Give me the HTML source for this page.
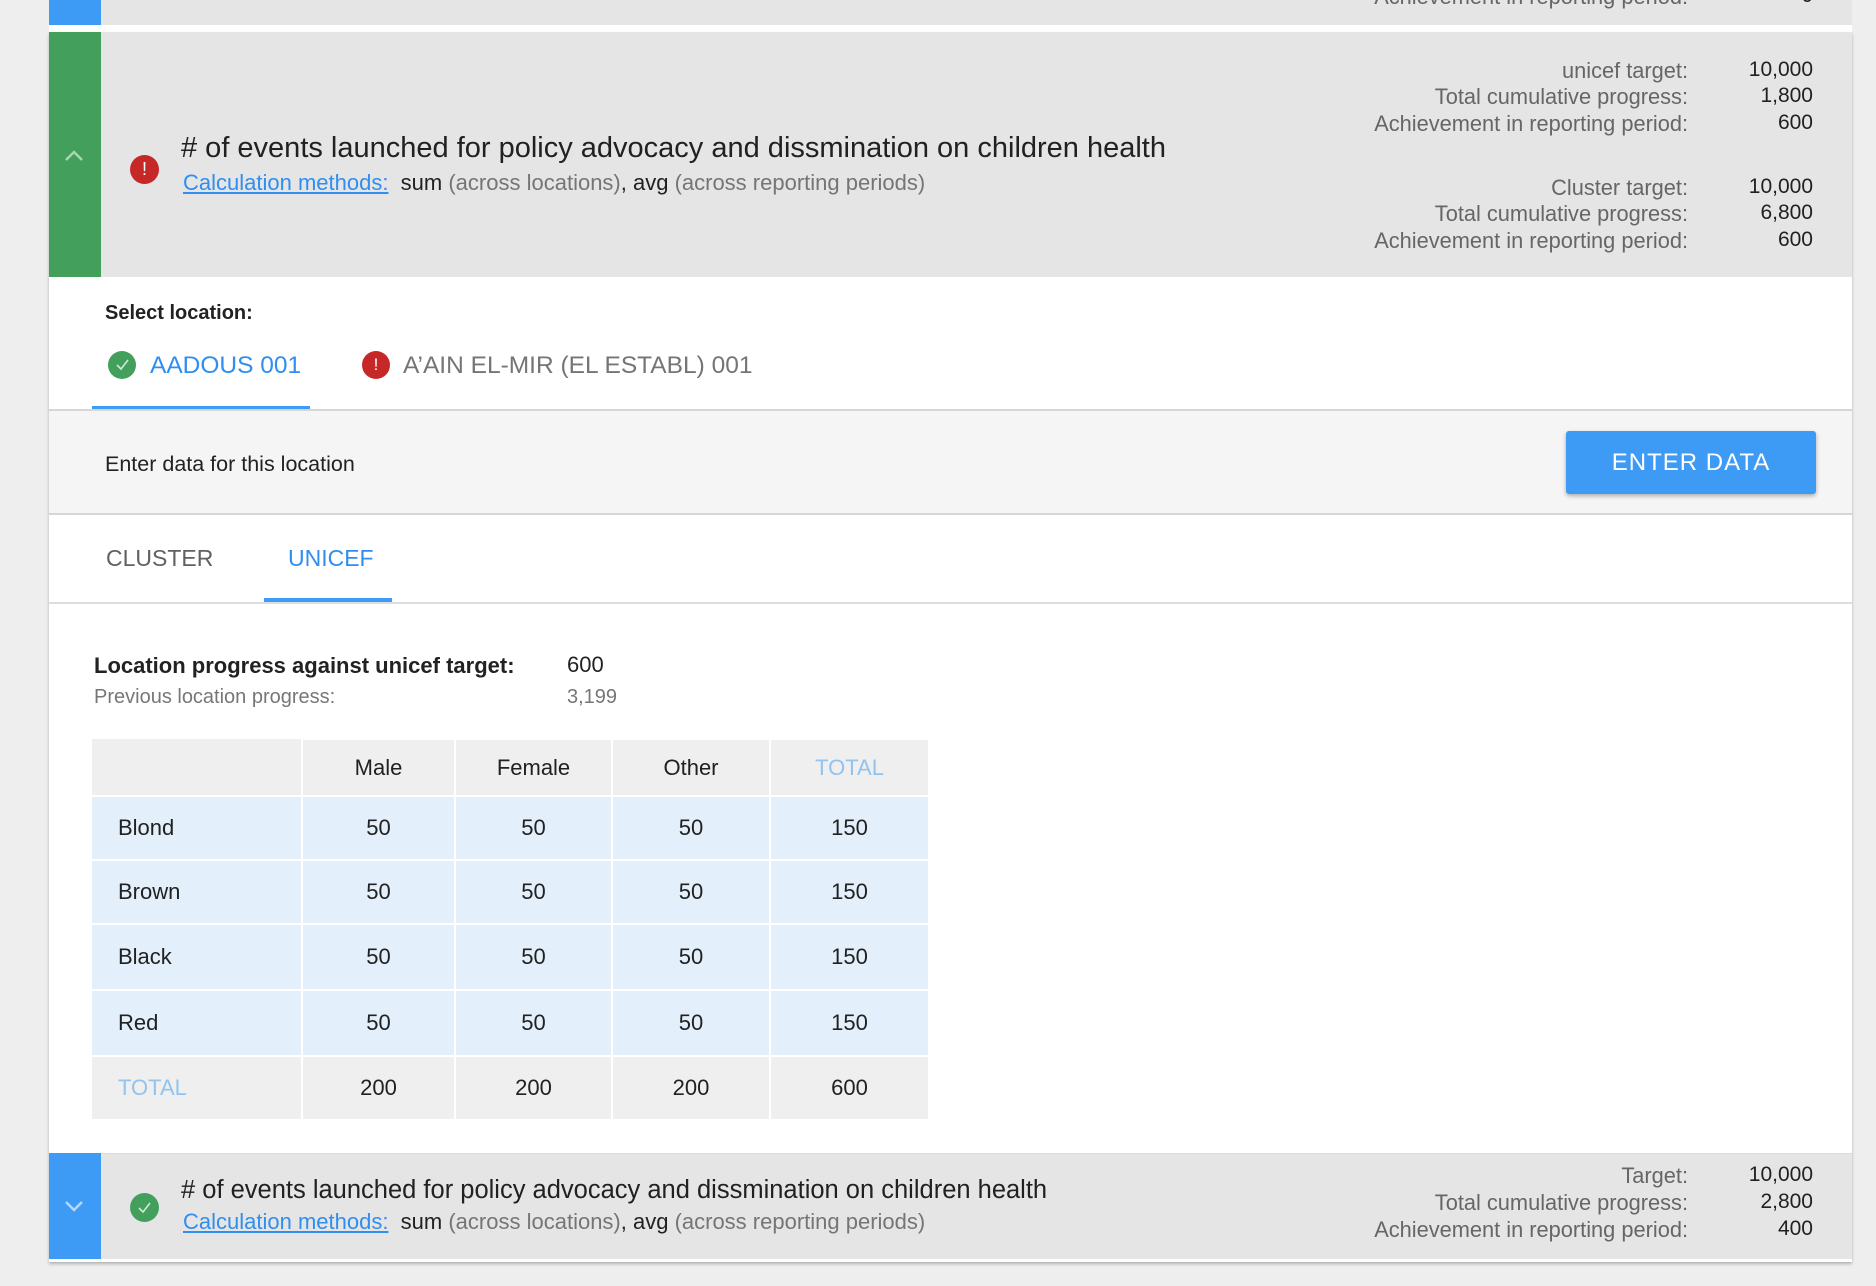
<!DOCTYPE html>
<html><head><meta charset="utf-8"><style>
*{margin:0;padding:0;box-sizing:border-box}
body{width:1876px;height:1286px;background:#eeeeee;font-family:"Liberation Sans",sans-serif;position:relative;overflow:hidden;color:#212121}
.a{position:absolute;white-space:nowrap}
.lbl{color:#666;font-size:21.8px;text-align:right;width:500px}
.val{color:#212121;font-size:21px;text-align:right;width:120px}
.link{color:#2f8ef0;text-decoration:underline}
.g{color:#757575}
td{border:2px solid #fff;text-align:center;font-size:22px;color:#212121}
</style></head><body>
<!-- top card remnant -->
<div class="a" style="left:49px;top:0;width:1803px;height:25px;background:#e5e5e5;overflow:hidden">
<div class="a lbl" style="left:1139px;top:-16px">Achievement in reporting period:</div><div class="a val" style="left:1644px;top:-16px">0</div></div>
<div class="a" style="left:49px;top:0;width:52px;height:25px;background:#3d9af5"></div>
<div class="a" style="left:49px;top:25px;width:1803px;height:7px;background:#fff"></div>
<!-- main card -->
<div class="a" style="left:49px;top:32px;width:1803px;height:1230px;background:#fff;box-shadow:0 2px 3px rgba(0,0,0,.25)"></div>
<div class="a" style="left:49px;top:32px;width:1803px;height:245px;background:#e5e5e5"></div>
<div class="a" style="left:49px;top:32px;width:52px;height:245px;background:#43a05c"></div>
<svg class="a" style="left:63px;top:148px" width="22" height="14"><path d="M3 12 L11 4 L19 12" stroke="#a8d5b2" stroke-width="2.5" fill="none"/></svg>
<div class="a" style="left:130px;top:155px;width:29px;height:29px;border-radius:50%;background:#c62828;color:#fff;font-size:18px;text-align:center;line-height:29px">!</div>
<div class="a" style="left:181px;top:132px;font-size:29px">#&nbsp;of events launched for policy advocacy and dissmination on children health</div>
<div class="a" style="left:183px;top:170px;font-size:22px"><span class="link">Calculation methods:</span>&nbsp; sum <span class="g">(across locations)</span>, avg <span class="g">(across reporting periods)</span></div>
<div class="a lbl" style="left:1188px;top:58px">unicef target:</div><div class="a val" style="left:1693px;top:58px">10,000</div>
<div class="a lbl" style="left:1188px;top:84px">Total cumulative progress:</div><div class="a val" style="left:1693px;top:84px">1,800</div>
<div class="a lbl" style="left:1188px;top:111px">Achievement in reporting period:</div><div class="a val" style="left:1693px;top:111px">600</div>
<div class="a lbl" style="left:1188px;top:175px">Cluster target:</div><div class="a val" style="left:1693px;top:175px">10,000</div>
<div class="a lbl" style="left:1188px;top:201px">Total cumulative progress:</div><div class="a val" style="left:1693px;top:201px">6,800</div>
<div class="a lbl" style="left:1188px;top:228px">Achievement in reporting period:</div><div class="a val" style="left:1693px;top:228px">600</div>
<!-- select location -->
<div class="a" style="left:105px;top:302px;font-size:20px;font-weight:bold;color:#222">Select location:</div>
<div class="a" style="left:108px;top:351px;width:28px;height:28px;border-radius:50%;background:#43a05c"><svg width="28" height="28"><path d="M9 14 L13 18 L20 9" stroke="#cfe9d5" stroke-width="1.6" fill="none"/></svg></div>
<div class="a" style="left:150px;top:352px;font-size:24.5px;color:#2f8ef0">AADOUS 001</div>
<div class="a" style="left:362px;top:351px;width:28px;height:28px;border-radius:50%;background:#c62828;color:#fff;font-size:17px;text-align:center;line-height:28px">!</div>
<div class="a" style="left:403px;top:352px;font-size:24.5px;color:#757575">A’AIN EL-MIR (EL ESTABL) 001</div>
<div class="a" style="left:92px;top:406px;width:218px;height:3px;background:#3d9af5"></div>
<div class="a" style="left:49px;top:409px;width:1803px;height:106px;background:#f5f5f5;border-top:2px solid #d6d6d6;border-bottom:2px solid #d6d6d6"></div>
<div class="a" style="left:105px;top:452px;font-size:21.5px;color:#222">Enter data for this location</div>
<div class="a" style="left:1566px;top:431px;width:250px;height:63px;background:#3d9af5;border-radius:3px;box-shadow:0 2px 4px rgba(0,0,0,.3);color:#fff;font-size:24px;text-align:center;line-height:63px;letter-spacing:1px">ENTER DATA</div>
<!-- tabs -->
<div class="a" style="left:106px;top:545px;font-size:23px;color:#616161">CLUSTER</div>
<div class="a" style="left:288px;top:545px;font-size:23px;color:#2f8ef0">UNICEF</div>
<div class="a" style="left:264px;top:598px;width:128px;height:4px;background:#3d9af5"></div>
<div class="a" style="left:49px;top:602px;width:1803px;height:2px;background:#ddd"></div>
<div class="a" style="left:94px;top:653px;font-size:22px;font-weight:bold;color:#222">Location progress against unicef target:</div>
<div class="a" style="left:567px;top:652px;font-size:22px;color:#222">600</div>
<div class="a" style="left:94px;top:686px;font-size:20px;color:#777">Previous location progress:</div>
<div class="a" style="left:567px;top:686px;font-size:20px;color:#777">3,199</div>
<table class="a" style="left:92px;top:738px;width:838px;border-collapse:collapse">
<tr style="height:57px;background:#efefef"><td style="width:210px;border-top:0;border-left:0"></td><td style="width:153px">Male</td><td style="width:157px">Female</td><td style="width:158px">Other</td><td style="color:#90c4ef">TOTAL</td></tr>
<tr style="height:64px;background:#e3f0fb"><td style="text-align:left;padding-left:26px;border-left:0">Blond</td><td>50</td><td>50</td><td>50</td><td>150</td></tr>
<tr style="height:64px;background:#e3f0fb"><td style="text-align:left;padding-left:26px;border-left:0">Brown</td><td>50</td><td>50</td><td>50</td><td>150</td></tr>
<tr style="height:66px;background:#e3f0fb"><td style="text-align:left;padding-left:26px;border-left:0">Black</td><td>50</td><td>50</td><td>50</td><td>150</td></tr>
<tr style="height:66px;background:#e3f0fb"><td style="text-align:left;padding-left:26px;border-left:0">Red</td><td>50</td><td>50</td><td>50</td><td>150</td></tr>
<tr style="height:64px;background:#efefef"><td style="text-align:left;padding-left:26px;color:#90c4ef;border-left:0">TOTAL</td><td>200</td><td>200</td><td>200</td><td>600</td></tr>
</table>
<!-- bottom card -->
<div class="a" style="left:49px;top:1153px;width:1803px;height:106px;background:#e5e5e5;border-top:1px solid #ddd"></div>
<div class="a" style="left:49px;top:1153px;width:52px;height:106px;background:#3d9af5"></div>
<svg class="a" style="left:63px;top:1199px" width="22" height="14"><path d="M3 3 L11 11 L19 3" stroke="#b5d8fb" stroke-width="2.5" fill="none"/></svg>
<div class="a" style="left:130px;top:1193px;width:29px;height:29px;border-radius:50%;background:#43a05c"><svg width="29" height="29"><path d="M9 15 L13 19 L20 10" stroke="#cfe9d5" stroke-width="1.6" fill="none"/></svg></div>
<div class="a" style="left:181px;top:1176px;font-size:25.5px">#&nbsp;of events launched for policy advocacy and dissmination on children health</div>
<div class="a" style="left:183px;top:1209px;font-size:22px"><span class="link">Calculation methods:</span>&nbsp; sum <span class="g">(across locations)</span>, avg <span class="g">(across reporting periods)</span></div>
<div class="a lbl" style="left:1188px;top:1163px">Target:</div><div class="a val" style="left:1693px;top:1163px">10,000</div>
<div class="a lbl" style="left:1188px;top:1190px">Total cumulative progress:</div><div class="a val" style="left:1693px;top:1190px">2,800</div>
<div class="a lbl" style="left:1188px;top:1217px">Achievement in reporting period:</div><div class="a val" style="left:1693px;top:1217px">400</div>
</body></html>
